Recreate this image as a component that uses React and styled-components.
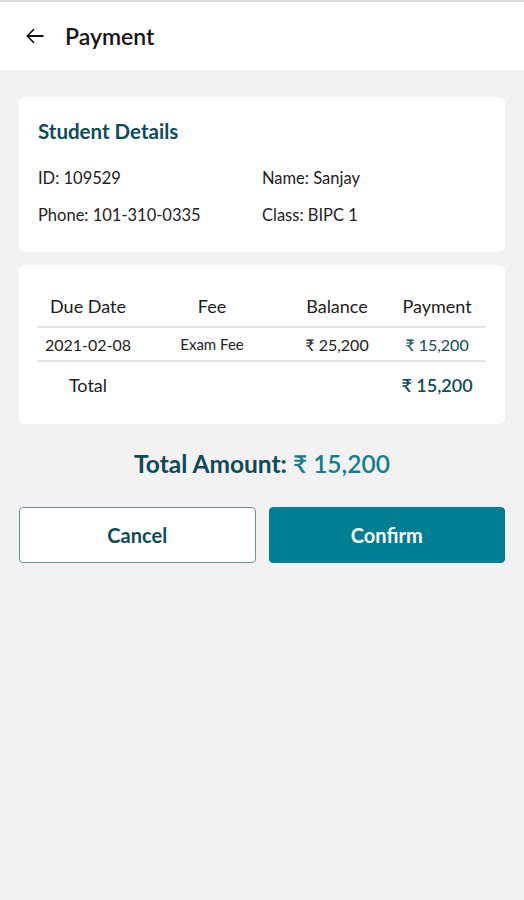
import React from 'react';
import styled, { createGlobalStyle } from 'styled-components';

const DARK_TEAL = '#0e4b59';
const TEAL = '#137e8e';
const BUTTON_BG = '#007e93';
const TEXT = '#222';

const GlobalStyle = createGlobalStyle`
    * { box-sizing: border-box; }
    body {
        margin: 0;
        background-color: #f2f2f2;
        font-family: Lato, "Open Sans", sans-serif;
        color: ${TEXT};
    }
`

const Page = styled.div`
    min-height: 900px;
    border-top: 2px solid #d9d9d9;
`

const Header = styled.header`
    height: 68px;
    background-color: white;
    display: flex;
    align-items: center;
    padding-left: 23px;
    gap: 18px;
`

const BackButton = styled.button`
    border: none;
    background: none;
    padding: 0;
    display: flex;
    cursor: pointer;
`

const Title = styled.h1`
    margin: 0;
    font-size: 23px;
    font-weight: 600;
    color: #151515;
`

const Main = styled.main`
    padding: 27px 19px 0;
    display: flex;
    flex-direction: column;
`

const Card = styled.section`
    background-color: white;
    border-radius: 6px;
    padding: ${props => props.padding};
    margin-bottom: 13px;
`

const CardTitle = styled.h2`
    margin: 0 0 25px;
    font-size: 20.5px;
    line-height: 24px;
    font-weight: 700;
    color: ${DARK_TEAL};
`

const DetailsGrid = styled.div`
    display: grid;
    grid-template-columns: 1fr 1fr;
    row-gap: 17px;
    font-size: 16.5px;
    line-height: 20px;
`

const Table = styled.table`
    width: 100%;
    border-collapse: collapse;
`

const Th = styled.th`
    font-size: 18px;
    font-weight: 400;
    color: #1c1c1c;
    text-align: center;
    height: 42px;
    border-bottom: 2px solid #e3e3e3;
    width: ${props => props.width};
`

const Td = styled.td`
    text-align: center;
    font-size: ${props => props.small ? '15px' : '16px'};
    color: ${props => props.teal ? DARK_TEAL : '#222'};
    height: 34px;
    border-bottom: 2px solid #e3e3e3;
`

const TotalTd = styled.td`
    text-align: center;
    font-size: 18px;
    color: ${props => props.teal ? DARK_TEAL : '#1c1c1c'};
    font-weight: ${props => props.teal ? 600 : 400};
    height: 46px;
    padding-bottom: 1px;
`

const TotalAmount = styled.p`
    margin: 12px 0 28px;
    text-align: center;
    font-size: 24.5px;
    line-height: 30px;
    font-weight: 700;
    color: ${DARK_TEAL};
`

const Amount = styled.span`
    color: ${TEAL};
    font-weight: 600;
`

const Actions = styled.div`
    display: grid;
    grid-template-columns: 1fr 1fr;
    gap: 13px;
`

const Button = styled.button`
    height: 56px;
    border-radius: 4px;
    font-family: inherit;
    font-size: 20px;
    font-weight: 700;
    cursor: pointer;
    border: ${props => props.primary ? `1px solid ${BUTTON_BG}` : '1.5px solid #6c9098'};
    background-color: ${props => props.primary ? BUTTON_BG : 'white'};
    color: ${props => props.primary ? 'white' : DARK_TEAL};
`

function BackArrow() {
    return (
        <svg width="24" height="24" viewBox="0 0 24 24" fill="#111">
            <path d="M20.5 11.1H6.2l5.4-5.4-1.1-1.1L3.2 12l7.3 7.4 1.1-1.1-5.4-5.4h14.3z" />
        </svg>
    )
}

function App() {
    return (
        <Page>
            <GlobalStyle />
            <Header>
                <BackButton aria-label="Back"><BackArrow /></BackButton>
                <Title>Payment</Title>
            </Header>
            <Main>
                <Card padding="22px 19px 27px">
                    <CardTitle>Student Details</CardTitle>
                    <DetailsGrid>
                        <span>ID: 109529</span>
                        <span>Name: Sanjay</span>
                        <span>Phone: 101-310-0335</span>
                        <span>Class: BIPC 1</span>
                    </DetailsGrid>
                </Card>
                <Card padding="20px 19px 17px">
                    <Table>
                        <thead>
                            <tr>
                                <Th width="100px">Due Date</Th>
                                <Th width="148px">Fee</Th>
                                <Th width="102px">Balance</Th>
                                <Th>Payment</Th>
                            </tr>
                        </thead>
                        <tbody>
                            <tr>
                                <Td>2021-02-08</Td>
                                <Td small>Exam Fee</Td>
                                <Td>₹ 25,200</Td>
                                <Td teal>₹ 15,200</Td>
                            </tr>
                            <tr>
                                <TotalTd>Total</TotalTd>
                                <TotalTd />
                                <TotalTd />
                                <TotalTd teal>₹ 15,200</TotalTd>
                            </tr>
                        </tbody>
                    </Table>
                </Card>
                <TotalAmount>Total Amount: <Amount>₹ 15,200</Amount></TotalAmount>
                <Actions>
                    <Button>Cancel</Button>
                    <Button primary>Confirm</Button>
                </Actions>
            </Main>
        </Page>
    )
}

export default App;
